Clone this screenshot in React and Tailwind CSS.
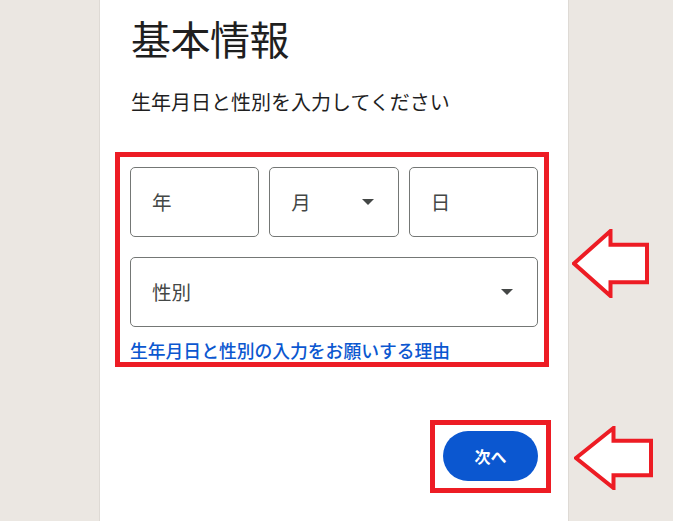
import React from 'react';

const font = { fontFamily: '"Noto Sans CJK JP", "Noto Sans", sans-serif' };

// Small caret used by the select fields
const Caret = () => (
  <svg width="12" height="6" viewBox="0 0 12 6" className="shrink-0">
    <path d="M0 0h12L6 6z" fill="#444746" />
  </svg>
);

// Red annotation arrow pointing left
const Arrow = ({ className, w, h }) => (
  <svg width={w} height={h} viewBox={`0 0 ${w} ${h}`} className={className}>
    <path
      d={`M2 ${h / 2} L${w * 0.5} 2 L${w * 0.5} ${h * 0.23} L${w - 2} ${h * 0.23} L${w - 2} ${h * 0.77} L${w * 0.5} ${h * 0.77} L${w * 0.5} ${h - 2} Z`}
      fill="#fff"
      stroke="#ed1c24"
      strokeWidth="4"
      strokeLinejoin="miter"
    />
  </svg>
);

const Field = ({ label, caret, className = '' }) => (
  <div
    className={`h-[70px] rounded-[5px] border border-[#747775] flex items-center justify-between pl-[21px] pr-[24px] text-[19.5px] text-[#444746] ${className}`}
  >
    <span>{label}</span>
    {caret && <Caret />}
  </div>
);

export default function App() {
  return (
    <div className="relative w-[673px] h-[521px] overflow-hidden bg-[#ebe7e2]" style={font}>
      <div className="ml-[99px] w-[470px] h-full bg-white border-x border-[#dedad5] px-[31px] pt-[14px]">
        <h1 className="text-[40px] leading-[48px] text-[#1f1f1f] tracking-[-0.5px]">基本情報</h1>
        <p className="mt-[27px] text-[20px] leading-[26px] text-[#1f1f1f]">生年月日と性別を入力してください</p>

        <div className="mt-[37px] ml-[-16px] mr-[-12px] h-[215px] border-[5px] border-[#ed1c24] pl-[10px] pr-[6px] pt-[10px]">
          <div className="grid grid-cols-3 gap-x-[10px]">
            <Field label="年" />
            <Field label="月" caret />
            <Field label="日" />
          </div>
          <Field label="性別" caret className="mt-[20px]" />
          <a className="block mt-[11px] text-[17.8px] leading-[24px] font-medium text-[#0b57d0]">
            生年月日と性別の入力をお願いする理由
          </a>
        </div>

        <div className="mt-[53px] flex justify-end mr-[-14px]">
          <div className="border-[5px] border-[#ed1c24] px-[8px] pt-[6px] pb-[7px]">
            <button className="w-[95px] h-[50px] rounded-full bg-[#0b57d0] text-white text-[16px] font-bold">
              次へ
            </button>
          </div>
        </div>
      </div>

      <Arrow className="absolute left-[572px] top-[229px]" w={77} h={69} />
      <Arrow className="absolute left-[574px] top-[426px]" w={79} h={64} />
    </div>
  );
}
